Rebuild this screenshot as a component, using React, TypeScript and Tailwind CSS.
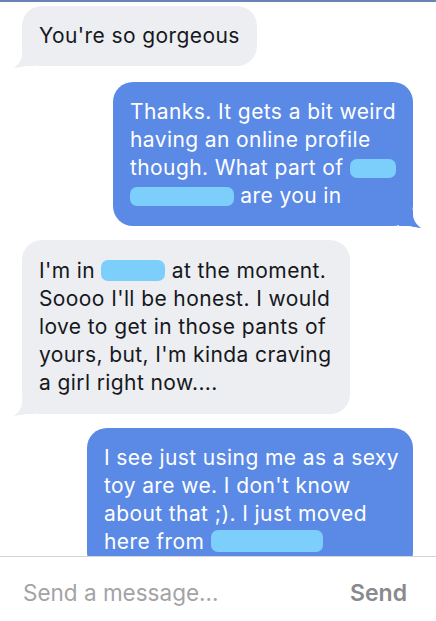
import React from 'react';

function Blot({ w, h = 19 }: { w: number; h?: number }) {
  return (
    <span
      className="inline-block align-[-3px] rounded-[7px] bg-[#7ccffa]"
      style={{ width: w, height: h }}
    />
  );
}

function TailLeft() {
  return (
    <svg className="absolute -left-[8px] bottom-[-2px]" width="22" height="18" viewBox="0 0 22 18">
      <path d="M8 0 H22 V16 H14 C11 16 7 17 0 18 C5 14 8 10 8 4 Z" fill="#eceef2" />
    </svg>
  );
}

function TailRight() {
  return (
    <svg className="absolute -right-[8px] bottom-[-2px]" width="22" height="18" viewBox="0 0 22 18">
      <path d="M14 0 H0 V16 H8 C11 16 15 17 22 18 C17 14 14 10 14 4 Z" fill="#5a89e6" />
    </svg>
  );
}

function Incoming({ children, className }: { children: React.ReactNode; className?: string }) {
  return (
    <div className={`relative self-start rounded-[20px] bg-[#eceef2] px-[17px] py-[16px] text-[#16181c] ${className ?? ''}`}>
      <div className="relative z-10">{children}</div>
      <TailLeft />
    </div>
  );
}

function Outgoing({ children, className, tail = true }: { children: React.ReactNode; className?: string; tail?: boolean }) {
  return (
    <div className={`relative self-end rounded-[20px] bg-[#5a89e6] px-[17px] py-[16px] text-white ${className ?? ''}`}>
      <div className="relative z-10">{children}</div>
      {tail && <TailRight />}
    </div>
  );
}

export default function App() {
  return (
    <div
      className="flex h-[621px] w-[436px] flex-col overflow-hidden border-t-2 border-[#6784b4] bg-white text-[21px] leading-[28px]"
      style={{ fontFamily: 'Inter, "Liberation Sans", sans-serif' }}
    >
      <div className="flex flex-1 flex-col overflow-hidden whitespace-nowrap pl-[22px] pr-[23px] pt-[4px] tracking-[0.4px]">
        <Incoming>You're so gorgeous</Incoming>

        <Outgoing className="mt-[16px] w-[300px]">
          Thanks. It gets a bit weird
          <br />
          having an online profile
          <br />
          though. What part of <Blot w={46} />
          <br />
          <Blot w={104} /> are you in
        </Outgoing>

        <Incoming className="mt-[14px] w-[328px] py-[17px]">
          I'm in <Blot w={64} h={21} /> at the moment.
          <br />
          Soooo I'll be honest. I would
          <br />
          love to get in those pants of
          <br />
          yours, but, I'm kinda craving
          <br />
          a girl right now....
        </Incoming>

        <Outgoing className="mt-[14px] w-[326px]" tail={false}>
          I see just using me as a sexy
          <br />
          toy are we. I don't know
          <br />
          about that ;). I just moved
          <br />
          here from <Blot w={112} h={22} />
        </Outgoing>
      </div>

      <div className="flex h-[65px] shrink-0 items-center justify-between border-t border-[#d4d4d4] bg-white pl-[23px] pr-[29px] pt-[8px]">
        <span className="text-[22.5px] text-[#a3a3a6]">Send a message...</span>
        <span className="text-[23px] font-semibold text-[#8a8a8e]">Send</span>
      </div>
    </div>
  );
}
